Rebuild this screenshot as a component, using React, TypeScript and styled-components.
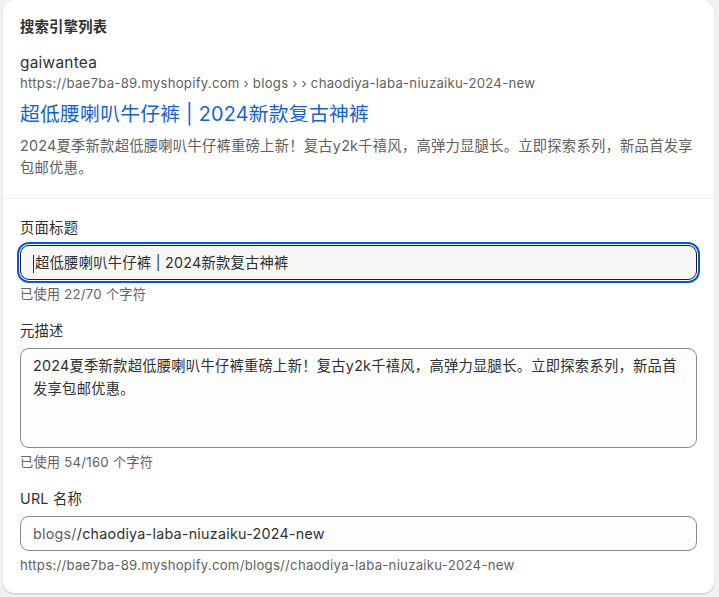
import React from 'react';
import styled, { createGlobalStyle } from 'styled-components';

const GlobalStyle = createGlobalStyle`
  html, body {
    margin: 0;
    padding: 0;
    background: #f1f1f1;
  }
  body {
    font-family: Inter, "Noto Sans CJK SC", sans-serif;
    color: #303030;
    letter-spacing: 0.25px;
    -webkit-font-smoothing: antialiased;
  }
`;

const Page = styled.div`
  padding: 0 4px 4px 2px;
`;

const Card = styled.div`
  background: #ffffff;
  border-radius: 13px;
  box-shadow: 0 1px 0 0 rgba(26, 26, 26, 0.1), inset 0 -1px 0 0 #d4d4d4,
    inset 1px 0 0 0 #ececec, inset -1px 0 0 0 #ececec;
  overflow: hidden;
`;

const Section = styled.section<{ $divided?: boolean }>`
  padding: 16px 18px 19px;
  border-bottom: ${({ $divided }) => ($divided ? '1px solid #ebebeb' : 'none')};
  display: flex;
  flex-direction: column;
`;

const Heading = styled.h2`
  margin: 0 0 14px;
  font-size: 14.3px;
  line-height: 22px;
  font-weight: 600;
  color: #303030;
`;

const SiteName = styled.div`
  font-size: 15.4px;
  line-height: 22px;
  color: #303030;
`;

const Crumbs = styled.div`
  font-size: 13.2px;
  line-height: 19px;
  color: #616161;
`;

const PreviewTitle = styled.div`
  margin-top: 7px;
  font-size: 19.8px;
  line-height: 28px;
  color: #1462d2;
`;

const PreviewText = styled.p`
  margin: 7px 0 0;
  font-size: 14.3px;
  line-height: 22px;
  color: #616161;
`;

const Fields = styled.div`
  padding: 18px 18px 19px;
  display: flex;
  flex-direction: column;
  gap: 16px;
`;

const Field = styled.div`
  display: flex;
  flex-direction: column;
`;

const Label = styled.label`
  font-size: 14.3px;
  line-height: 22px;
  color: #303030;
  margin-bottom: 6px;
`;

const Box = styled.div<{ $focused?: boolean; $height: number }>`
  box-sizing: border-box;
  height: ${({ $height }) => $height}px;
  display: flex;
  align-items: ${({ $height }) => ($height > 40 ? 'flex-start' : 'center')};
  padding: ${({ $height }) => ($height > 40 ? '5px 12px' : '0 12px')};
  border-radius: 9px;
  border: 1px solid ${({ $focused }) => ($focused ? '#1a1a1a' : '#8a8a8a')};
  background: ${({ $focused }) => ($focused ? '#f7f7f7' : '#fdfdfd')};
  box-shadow: ${({ $focused }) =>
    $focused ? '0 0 0 1px #ffffff, 0 0 0 3px #005bd3' : 'none'};
  font-size: 14.3px;
  line-height: 23px;
  color: #303030;
`;

const Caret = styled.span`
  display: inline-block;
  width: 1px;
  height: 18px;
  margin-right: 1px;
  background: #303030;
  vertical-align: middle;
`;

const Prefix = styled.span`
  color: #616161;
`;

const Help = styled.div`
  margin-top: 4px;
  font-size: 13.2px;
  line-height: 20px;
  color: #616161;
`;

const App: React.FC = () => {
  const description =
    '2024夏季新款超低腰喇叭牛仔裤重磅上新！复古y2k千禧风，高弹力显腿长。立即探索系列，新品首发享包邮优惠。';

  return (
    <Page>
      <GlobalStyle />
      <Card>
        <Section $divided>
          <Heading>搜索引擎列表</Heading>
          <SiteName>gaiwantea</SiteName>
          <Crumbs>https://bae7ba-89.myshopify.com › blogs › › chaodiya-laba-niuzaiku-2024-new</Crumbs>
          <PreviewTitle>超低腰喇叭牛仔裤 | 2024新款复古神裤</PreviewTitle>
          <PreviewText>{description}</PreviewText>
        </Section>

        <Fields>
          <Field>
            <Label>页面标题</Label>
            <Box $focused $height={35}>
              <span>
                <Caret />
                超低腰喇叭牛仔裤 | 2024新款复古神裤
              </span>
            </Box>
            <Help>已使用 22/70 个字符</Help>
          </Field>

          <Field>
            <Label>元描述</Label>
            <Box $height={100}>{description}</Box>
            <Help>已使用 54/160 个字符</Help>
          </Field>

          <Field>
            <Label>URL 名称</Label>
            <Box $height={35}>
              <span>
                <Prefix>blogs/</Prefix>/chaodiya-laba-niuzaiku-2024-new
              </span>
            </Box>
            <Help>https://bae7ba-89.myshopify.com/blogs//chaodiya-laba-niuzaiku-2024-new</Help>
          </Field>
        </Fields>
      </Card>
    </Page>
  );
};

export default App;
